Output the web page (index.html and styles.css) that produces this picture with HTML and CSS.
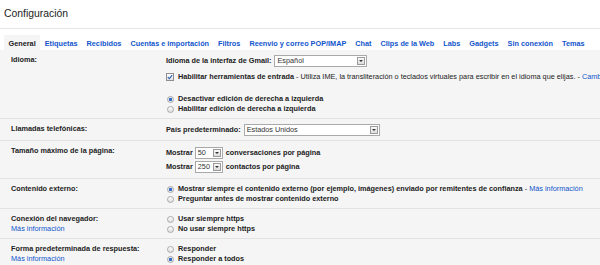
FILE: index.html
```html
<!DOCTYPE html>
<html lang="es">
<head>
    <meta charset="UTF-8">
    <title>Configuración</title>
    <link rel="stylesheet" href="styles.css">
</head>
<body>

<div class="header">
    <h1 class="title">Configuración</h1>
</div>

<!-- Tabs -->
<div class="tabs">
    <span class="tab tab-active">General</span>
    <a class="tab" href="#">Etiquetas</a>
    <a class="tab" href="#">Recibidos</a>
    <a class="tab" href="#">Cuentas e importación</a>
    <a class="tab" href="#">Filtros</a>
    <a class="tab" href="#">Reenvio y correo POP/IMAP</a>
    <a class="tab" href="#">Chat</a>
    <a class="tab" href="#">Clips de la Web</a>
    <a class="tab" href="#">Labs</a>
    <a class="tab" href="#">Gadgets</a>
    <a class="tab" href="#">Sin conexión</a>
    <a class="tab" href="#">Temas</a>
</div>

<div class="settings">

    <div class="row">
        <div class="row-label">Idioma:</div>
        <div class="row-value">
            <div class="line line-select">
                <b>Idioma de la interfaz de Gmail:</b>
                <span class="dropdown dropdown-lang">Español<span class="dropdown-arrow"></span></span>
            </div>
            <div class="line line-check">
                <span class="checkbox">
                    <svg width="8" height="8" viewBox="0 0 8 8"><path d="M1.8 4.1 L3.3 5.7 L6.2 2.2" fill="none" stroke="#2f63b8" stroke-width="1.1"/></svg>
                </span>
                <b>Habilitar herramientas de entrada</b>&nbsp;- Utiliza IME, la transliteración o teclados virtuales para escribir en el idioma que elijas. -&nbsp;<a href="#">Cambiar configuración</a>
            </div>
            <div class="radios radios-spaced">
                <div class="line"><span class="radio radio-on"></span><b>Desactivar edición de derecha a izquierda</b></div>
                <div class="line"><span class="radio"></span><b>Habilitar edición de derecha a izquierda</b></div>
            </div>
        </div>
    </div>

    <div class="row">
        <div class="row-label">Llamadas telefónicas:</div>
        <div class="row-value">
            <div class="line line-select">
                <b>País predeterminado:</b>
                <span class="dropdown dropdown-country">Estados Unidos<span class="dropdown-arrow"></span></span>
            </div>
        </div>
    </div>

    <div class="row">
        <div class="row-label">Tamaño máximo de la página:</div>
        <div class="row-value">
            <div class="line line-size">
                <b>Mostrar</b>
                <span class="dropdown dropdown-num">50<span class="dropdown-arrow"></span></span>
                <b>conversaciones por página</b>
            </div>
            <div class="line line-size">
                <b>Mostrar</b>
                <span class="dropdown dropdown-num">250<span class="dropdown-arrow"></span></span>
                <b>contactos por página</b>
            </div>
        </div>
    </div>

    <div class="row">
        <div class="row-label">Contenido externo:</div>
        <div class="row-value">
            <div class="radios">
                <div class="line"><span class="radio radio-on"></span><b>Mostrar siempre el contenido externo (por ejemplo, imágenes) enviado por remitentes de confianza</b>&nbsp;-&nbsp;<a href="#">Más información</a></div>
                <div class="line"><span class="radio"></span><b>Preguntar antes de mostrar contenido externo</b></div>
            </div>
        </div>
    </div>

    <div class="row">
        <div class="row-label">
            Conexión del navegador:
            <a class="more" href="#">Más información</a>
        </div>
        <div class="row-value">
            <div class="radios">
                <div class="line"><span class="radio"></span><b>Usar siempre https</b></div>
                <div class="line"><span class="radio"></span><b>No usar siempre https</b></div>
            </div>
        </div>
    </div>

    <div class="row">
        <div class="row-label">
            Forma predeterminada de respuesta:
            <a class="more" href="#">Más información</a>
        </div>
        <div class="row-value">
            <div class="radios">
                <div class="line"><span class="radio"></span><b>Responder</b></div>
                <div class="line"><span class="radio radio-on"></span><b>Responder a todos</b></div>
            </div>
        </div>
    </div>

</div>

</body>
</html>
```

FILE: styles.css
```css
body {
    margin: 0;
    font-family: "Liberation Sans", Arial, sans-serif;
    font-size: 7.3px;
    color: #222;
    background: #fff;
    white-space: nowrap;
    overflow: hidden;
}
a {
    color: #15c;
    text-decoration: none;
}
b {
    font-weight: bold;
}

/* Page title */
.header {
    padding: 8px 4px;
    border-bottom: 1px solid #e5e5e5;
}
.title {
    margin: 0;
    font-size: 10.4px;
    font-weight: normal;
    line-height: 12px;
    color: #222;
}

/* Tabs */
.tabs {
    display: flex;
    padding: 6px 0 0 4px;
}
.tab {
    height: 15px;
    box-sizing: border-box;
    padding: 4px 4.5px 0;
    line-height: 10px;
    font-weight: bold;
    color: #15c;
}
.tab-active {
    background: #f5f5f5;
    color: #222;
}

/* Settings table */
.settings {
    background: #f5f5f5;
}
.row {
    display: flex;
    padding: 5px 0 4px;
    border-bottom: 1px solid #e2e2e2;
}
.row-label {
    flex-shrink: 0;
    width: 166px;
    padding-left: 11px;
    box-sizing: border-box;
    font-weight: bold;
    line-height: 10px;
}
.more {
    display: block;
    font-weight: normal;
}
.row-value {
    line-height: 10px;
}
.line {
    display: flex;
    align-items: center;
    height: 10px;
}
.line-select {
    height: 12px;
}
.line-check {
    margin-top: 5px;
}
.line-size {
    height: 14px;
}
.radios-spaced {
    margin-top: 12px;
}

/* Dropdowns drawn like the old select boxes */
.dropdown {
    display: inline-flex;
    align-items: center;
    justify-content: space-between;
    height: 12px;
    box-sizing: border-box;
    margin: 0 3px 0 3px;
    padding-left: 2px;
    border: 1px solid #a9a9a9;
    background: #fff;
    font-weight: normal;
    color: #333;
}
.dropdown-lang {
    width: 93px;
}
.dropdown-country {
    width: 136px;
}
.dropdown-num {
    width: 28px;
    margin-left: 2px;
}
.dropdown-arrow {
    display: flex;
    align-items: center;
    justify-content: center;
    width: 8px;
    height: 8px;
    box-sizing: border-box;
    margin-right: 1px;
    border: 1px solid #9a9a9a;
    background: linear-gradient(#fbfbfb, #dcdcdc);
}
.dropdown-arrow::after {
    content: "";
    border-left: 2px solid transparent;
    border-right: 2px solid transparent;
    border-top: 2px solid #333;
}

/* Checkbox and radios */
.checkbox {
    display: inline-flex;
    width: 8px;
    height: 8px;
    box-sizing: border-box;
    margin-right: 4px;
    border: 1px solid #8f8f8f;
    background: linear-gradient(#fff, #e2e2e2);
    position: relative;
}
.checkbox svg {
    position: absolute;
    left: -1px;
    top: -1px;
}
.radio {
    display: inline-block;
    width: 7px;
    height: 7px;
    box-sizing: border-box;
    margin: 0 4px 0 1px;
    border: 1px solid #a8a8a8;
    border-radius: 50%;
    background: linear-gradient(#fff, #dedede);
}
.radio-on {
    background: radial-gradient(circle, #2e68c8 0, #2e68c8 1.3px, #e9e9e9 2px);
}
```
